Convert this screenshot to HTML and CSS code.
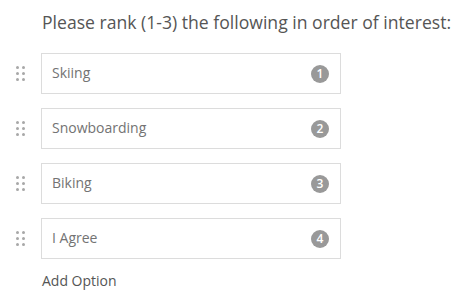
FILE: index.html
```html
<!DOCTYPE html>
<html lang="en">
    <head>
        <meta charset="UTF-8" />
        <meta name="viewport" content="width=device-width, initial-scale=1.0" />
        <title>Rank Question</title>
        <link rel="stylesheet" href="styles.css">
    </head>
    <body>
        <div class="question">
            <h2 class="question-title">Please rank (1-3) the following in order of interest:</h2>
            <ul class="rank-list">
                <li class="rank-item">
                    <span class="handle"><i></i><i></i><i></i><i></i><i></i><i></i></span>
                    <div class="rank-box">
                        <span class="rank-label">Skiing</span>
                        <span class="rank-badge">1</span>
                    </div>
                </li>
                <li class="rank-item">
                    <span class="handle"><i></i><i></i><i></i><i></i><i></i><i></i></span>
                    <div class="rank-box">
                        <span class="rank-label">Snowboarding</span>
                        <span class="rank-badge">2</span>
                    </div>
                </li>
                <li class="rank-item">
                    <span class="handle"><i></i><i></i><i></i><i></i><i></i><i></i></span>
                    <div class="rank-box">
                        <span class="rank-label">Biking</span>
                        <span class="rank-badge">3</span>
                    </div>
                </li>
                <li class="rank-item">
                    <span class="handle"><i></i><i></i><i></i><i></i><i></i><i></i></span>
                    <div class="rank-box">
                        <span class="rank-label">I Agree</span>
                        <span class="rank-badge">4</span>
                    </div>
                </li>
            </ul>
            <a class="add-option" href="#">Add Option</a>
        </div>
    </body>
</html>
```

FILE: styles.css
```css
body {
    margin: 0;
    font-family: "Open Sans", "Noto Sans", sans-serif;
    background: #ffffff;
}

.question {
    padding: 9px 0 0 0;
}

.question-title {
    margin: 0 0 18px 42px;
    font-size: 17.6px;
    font-weight: 400;
    line-height: 26px;
    color: #555555;
    white-space: nowrap;
}

.rank-list {
    list-style: none;
    margin: 0;
    padding: 0;
    display: flex;
    flex-direction: column;
    gap: 14px;
}

.rank-item {
    display: flex;
    align-items: center;
}

.handle {
    width: 41px;
    display: grid;
    grid-template-columns: 3px 3px;
    grid-template-rows: 3px 3px 3px;
    column-gap: 3px;
    row-gap: 3px;
    justify-content: center;
}

.handle i {
    display: block;
    width: 3px;
    height: 3px;
    border-radius: 50%;
    background: #a8a8a8;
}

.rank-box {
    box-sizing: border-box;
    width: 300px;
    height: 41px;
    border: 1px solid #dcdcdc;
    display: flex;
    align-items: center;
    justify-content: space-between;
    padding: 0 11px 2px 10px;
}

.rank-label {
    font-size: 14px;
    color: #737373;
}

.rank-badge {
    width: 18px;
    height: 18px;
    margin-top: 2px;
    border-radius: 50%;
    background: #999999;
    color: #ffffff;
    font-size: 12px;
    font-weight: 600;
    line-height: 18px;
    text-align: center;
}

.add-option {
    display: block;
    margin: 12px 0 0 42px;
    font-size: 14px;
    color: #555555;
    text-decoration: none;
}
```
